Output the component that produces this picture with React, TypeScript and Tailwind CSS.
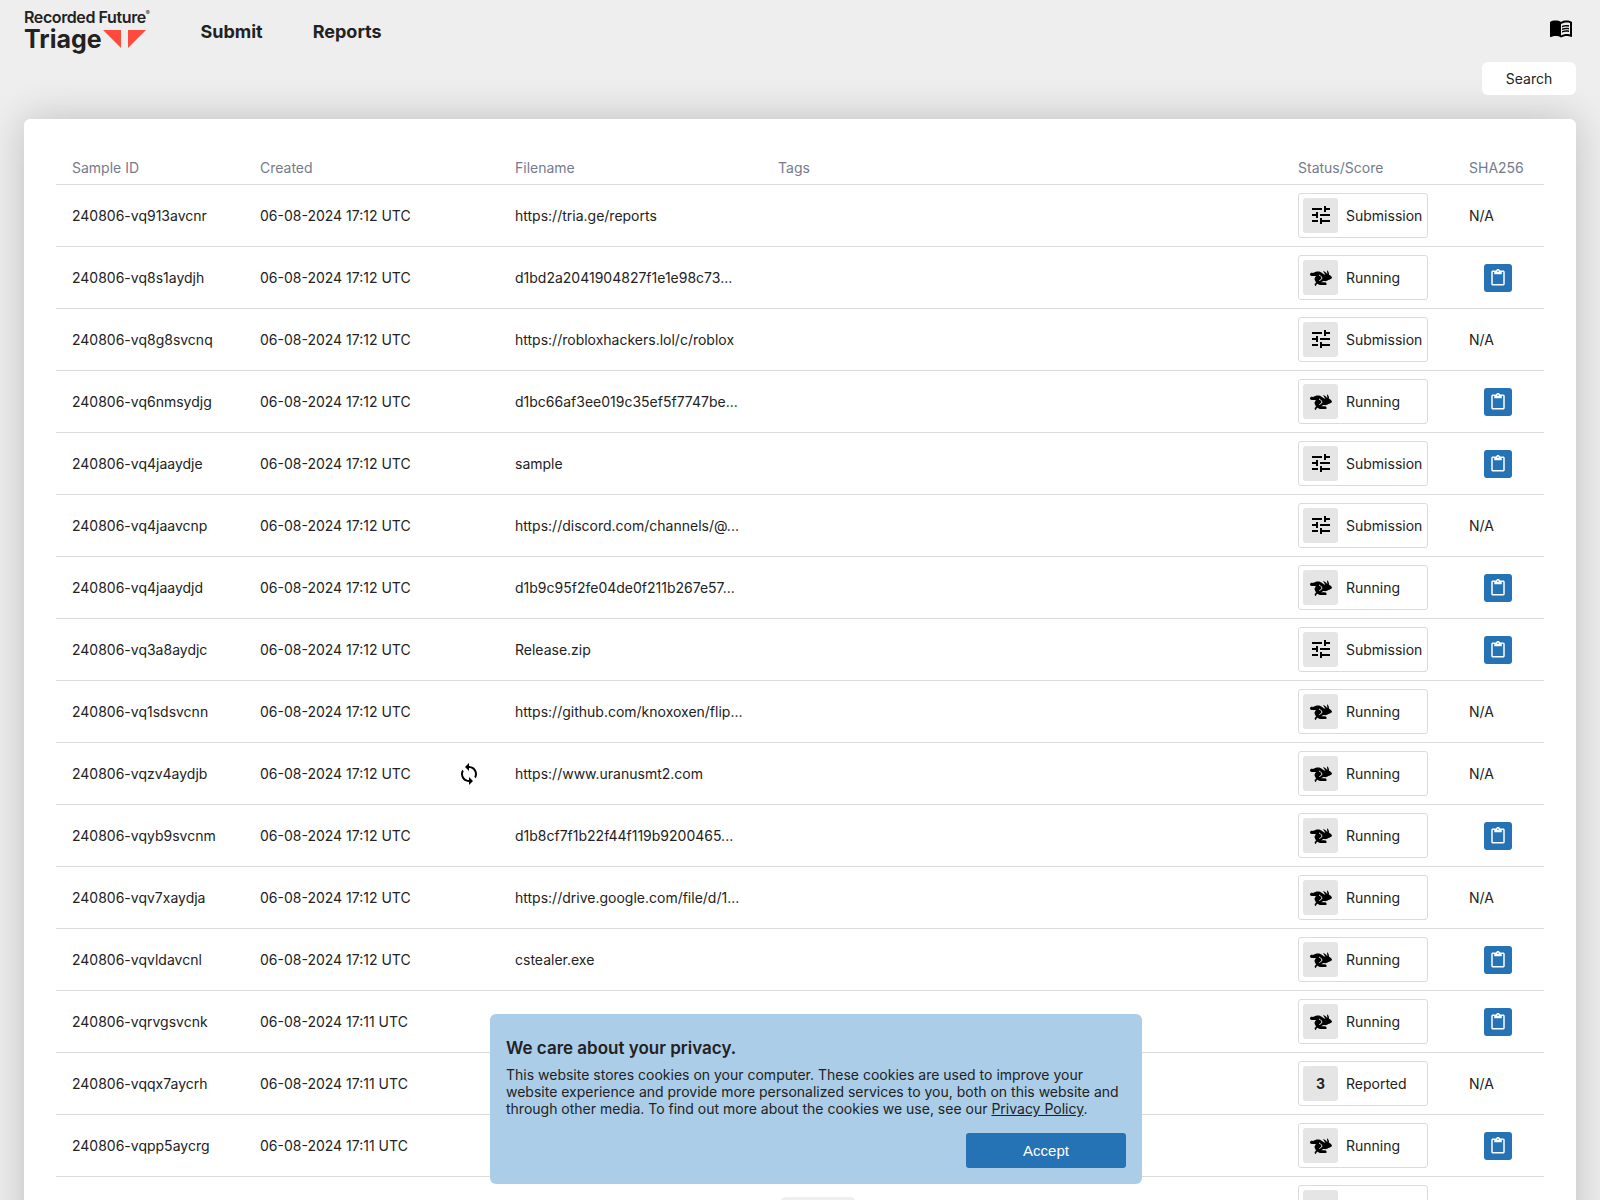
import React from 'react';
import { MdContentPaste, MdMenuBook, MdSync, MdTune } from 'react-icons/md';

type Status = 'Submission' | 'Running' | 'Reported';

interface Sample {
    id: string;
    created: string;
    filename: string;
    status: Status;
    score?: number;
    hasHash?: boolean;
    resubmitted?: boolean;
}

const samples: Sample[] = [
    { id: '240806-vq913avcnr', created: '06-08-2024 17:12 UTC', filename: 'https://tria.ge/reports', status: 'Submission' },
    { id: '240806-vq8s1aydjh', created: '06-08-2024 17:12 UTC', filename: 'd1bd2a2041904827f1e1e98c73...', status: 'Running', hasHash: true },
    { id: '240806-vq8g8svcnq', created: '06-08-2024 17:12 UTC', filename: 'https://robloxhackers.lol/c/roblox', status: 'Submission' },
    { id: '240806-vq6nmsydjg', created: '06-08-2024 17:12 UTC', filename: 'd1bc66af3ee019c35ef5f7747be...', status: 'Running', hasHash: true },
    { id: '240806-vq4jaaydje', created: '06-08-2024 17:12 UTC', filename: 'sample', status: 'Submission', hasHash: true },
    { id: '240806-vq4jaavcnp', created: '06-08-2024 17:12 UTC', filename: 'https://discord.com/channels/@...', status: 'Submission' },
    { id: '240806-vq4jaaydjd', created: '06-08-2024 17:12 UTC', filename: 'd1b9c95f2fe04de0f211b267e57...', status: 'Running', hasHash: true },
    { id: '240806-vq3a8aydjc', created: '06-08-2024 17:12 UTC', filename: 'Release.zip', status: 'Submission', hasHash: true },
    { id: '240806-vq1sdsvcnn', created: '06-08-2024 17:12 UTC', filename: 'https://github.com/knoxoxen/flip...', status: 'Running' },
    { id: '240806-vqzv4aydjb', created: '06-08-2024 17:12 UTC', filename: 'https://www.uranusmt2.com', status: 'Running', resubmitted: true },
    { id: '240806-vqyb9svcnm', created: '06-08-2024 17:12 UTC', filename: 'd1b8cf7f1b22f44f119b9200465...', status: 'Running', hasHash: true },
    { id: '240806-vqv7xaydja', created: '06-08-2024 17:12 UTC', filename: 'https://drive.google.com/file/d/1...', status: 'Running' },
    { id: '240806-vqvldavcnl', created: '06-08-2024 17:12 UTC', filename: 'cstealer.exe', status: 'Running', hasHash: true },
    { id: '240806-vqrvgsvcnk', created: '06-08-2024 17:11 UTC', filename: '', status: 'Running', hasHash: true },
    { id: '240806-vqqx7aycrh', created: '06-08-2024 17:11 UTC', filename: '', status: 'Reported', score: 3 },
    { id: '240806-vqpp5aycrg', created: '06-08-2024 17:11 UTC', filename: '', status: 'Running', hasHash: true }
];

const Logo: React.FC = () => (
    <a href="/" className="flex flex-col text-[#222] mt-2">
        <span className="flex text-base leading-[18px] font-semibold tracking-tight">
            Recorded Future
            <span className="text-[6px] leading-[10px] font-normal">®</span>
        </span>
        <span className="flex items-center text-[25px] leading-[26px] font-bold">
            Triage
            <svg className="ml-px w-11 h-[18px]" viewBox="0 0 44 18" fill="#ff4b3e" aria-hidden="true">
                <path d="M0 0H18V18Z" />
                <path d="M25 0H43L25 18Z" />
            </svg>
        </span>
    </a>
);

const RabbitIcon: React.FC = () => (
    <svg className="mt-0.5 w-[22px] h-4" viewBox="0 0 66 48" aria-hidden="true">
        <path
            fill="#000"
            d="M0 13C0 8 5 7 9 9C15 5 25 3 31 6C37 9 42 14 46 14L39 3C45 4 49 8 52 13L51 1C56 4 57 9 57 14C62 16 66 20 66 24C63 28 59 29 55 30C52 33 47 34 42 33C39 33 36 35 34 37H44C49 37 51 41 49 45H30C25 44 21 41 17 37L13 33C12 27 15 22 18 18C13 17 9 19 5 18C2 18 0 16 0 13Z"
        />
        <path fill="#000" d="M14 42L18 38L23 40L19 44L18 48C15 48 14 46 14 42Z" />
        <path fill="none" stroke="#e5e5e5" strokeWidth="3" d="M27 15C34 18 37 23 35 27L28 32" />
        <path fill="#e5e5e5" d="M11 24L17 35L13 38L9 34Z" />
    </svg>
);

const StatusBadge: React.FC<{ status: Status; score?: number }> = ({ status, score }) => (
    <div className="flex items-center gap-2 w-[130px] h-[45px] px-1 border border-[#dbdbdb] rounded-[3px]">
        <div className="flex items-center justify-center shrink-0 size-[35px] rounded-[3px] bg-[#e5e5e5] text-black">
            {status === 'Submission' && <MdTune className="size-6" />}
            {status === 'Running' && <RabbitIcon />}
            {status === 'Reported' && <span className="font-bold text-[#222]">{score}</span>}
        </div>
        <span>{status}</span>
    </div>
);

const SampleRow: React.FC<{ sample: Sample }> = ({ sample }) => (
    <tr className="h-[62px] border-b border-[#dbdbdb]">
        <td className="pl-4">{sample.id}</td>
        <td>{sample.created}</td>
        <td>{sample.resubmitted && <MdSync className="mt-px size-6 text-black" />}</td>
        <td>{sample.filename}</td>
        <td></td>
        <td>
            <StatusBadge status={sample.status} score={sample.score} />
        </td>
        <td>
            {sample.hasHash ? (
                <button
                    type="button"
                    aria-label="Copy SHA256"
                    className="flex items-center justify-center mt-px ml-[15px] size-7 rounded-[3px] bg-[#2572b4] text-white"
                >
                    <MdContentPaste className="size-[18px]" />
                </button>
            ) : (
                'N/A'
            )}
        </td>
    </tr>
);

// Row that is still loading: only the empty badge frame is there
const PlaceholderRow: React.FC = () => (
    <tr className="h-[62px] border-b border-[#dbdbdb]">
        <td colSpan={5}></td>
        <td>
            <div className="flex items-center w-[130px] h-[45px] px-1 border border-[#dbdbdb] rounded-[3px]">
                <div className="size-[35px] rounded-[3px] bg-[#e5e5e5]" />
            </div>
        </td>
        <td></td>
    </tr>
);

const CookieBanner: React.FC = () => (
    <div className="fixed bottom-4 left-[490px] z-20 flex flex-col w-[652px] px-4 pt-6 pb-4 rounded-md bg-[#abcde8] text-[#222]">
        <h2 className="text-[17px] leading-5 font-semibold">We care about your privacy.</h2>
        <p className="mt-2 text-sm leading-[17px]">
            This website stores cookies on your computer. These cookies are used to improve your website experience and
            provide more personalized services to you, both on this website and through other media. To find out more
            about the cookies we use, see our{' '}
            <a href="/privacy" className="underline">
                Privacy Policy
            </a>
            .
        </p>
        <button
            type="button"
            className="self-end mt-4 w-40 h-[35px] rounded-[3px] bg-[#2572b4] font-['Liberation_Sans',sans-serif] text-[15px] text-white"
        >
            Accept
        </button>
    </div>
);

export default function App() {
    return (
        <div className="min-h-screen bg-[#eee] font-['Inter',sans-serif] text-sm text-[#222]">
            <header className="flex items-start h-[62px] px-6">
                <Logo />
                <nav className="flex gap-[50px] ml-[51px] mt-[18px] text-lg leading-7 font-bold">
                    <a href="/submit">Submit</a>
                    <a href="/reports">Reports</a>
                </nav>
                <a href="/docs" aria-label="Documentation" className="ml-auto mt-4 mr-[3px] text-black">
                    <MdMenuBook className="size-6" />
                </a>
            </header>
            <div className="flex justify-end px-6">
                <button type="button" className="w-[94px] h-[33px] rounded-md bg-white">
                    Search
                </button>
            </div>
            <main className="mx-6 mt-6 px-8 pt-8 pb-8 rounded-md bg-white shadow-[0_0_40px_rgba(0,0,0,0.2)]">
                <table className="w-full table-fixed border-collapse text-left leading-[21px]">
                    <colgroup>
                        <col className="w-[204px]" />
                        <col className="w-[197px]" />
                        <col className="w-[58px]" />
                        <col className="w-[263px]" />
                        <col />
                        <col className="w-[171px]" />
                        <col className="w-[75px]" />
                    </colgroup>
                    <thead>
                        <tr className="h-[33px] border-b border-[#dbdbdb] text-[#757b8d]">
                            <th className="pl-4 font-normal">Sample ID</th>
                            <th className="font-normal" colSpan={2}>Created</th>
                            <th className="font-normal">Filename</th>
                            <th className="font-normal">Tags</th>
                            <th className="font-normal">Status/Score</th>
                            <th className="font-normal">SHA256</th>
                        </tr>
                    </thead>
                    <tbody>
                        {samples.map(sample => (
                            <SampleRow key={sample.id} sample={sample} />
                        ))}
                        <PlaceholderRow />
                    </tbody>
                </table>
            </main>
            {/* Pager, only its top edge shows above the fold */}
            <div className="fixed -bottom-7 left-[780px] z-10 w-[76px] h-[31px] rounded-md bg-[#eee]" />
            <CookieBanner />
        </div>
    );
}
